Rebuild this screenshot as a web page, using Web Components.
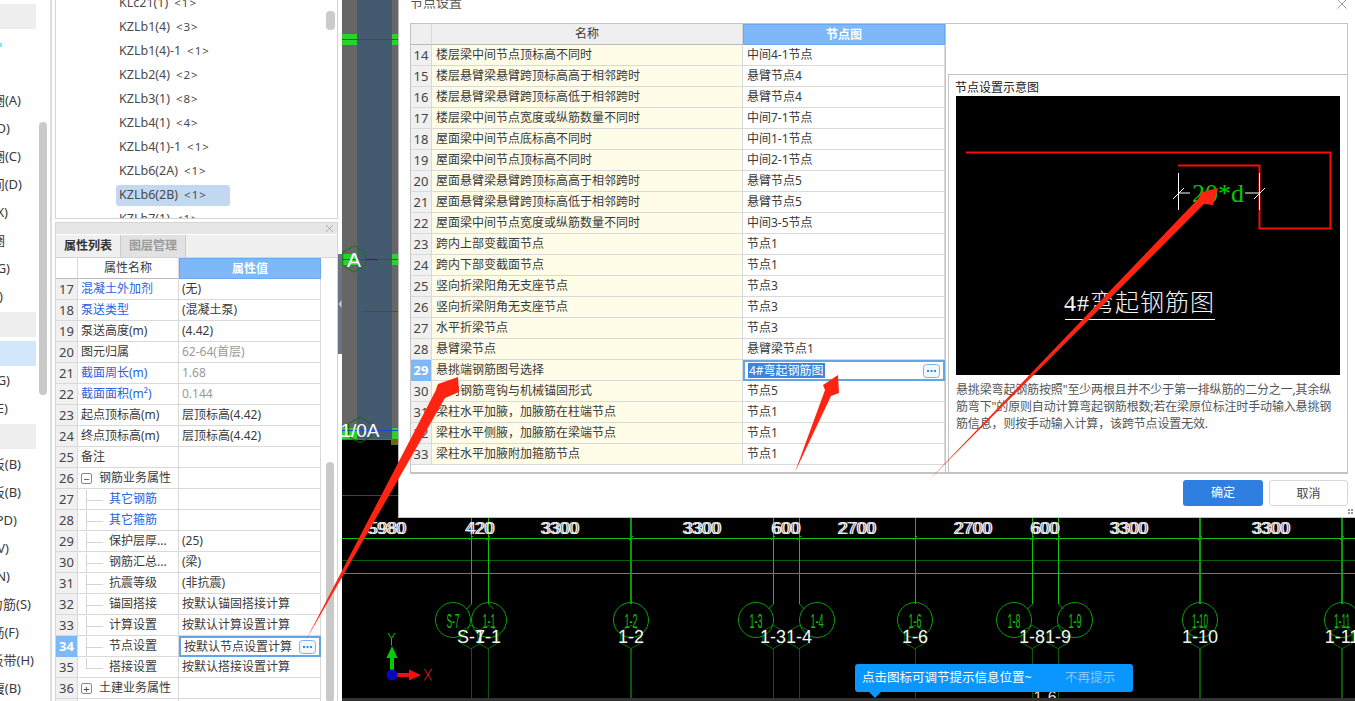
<!DOCTYPE html>
<html lang="zh-CN"><head><meta charset="utf-8"><title>节点设置</title>
<style>
html,body{margin:0;padding:0;height:701px;overflow:hidden;background:#fff}
body{font:12px/20px "Noto Sans","Noto Sans CJK SC",sans-serif;color:#3a3a3a}
</style></head><body>
<app-shell>
  <side-strip></side-strip>
  <mid-column>
    <tree-panel></tree-panel>
    <prop-panel></prop-panel>
  </mid-column>
  <split-bar></split-bar>
  <cad-canvas><node-dialog></node-dialog><hint-bubble></hint-bubble></cad-canvas>
</app-shell>
<red-arrows></red-arrows>
<script>
function def(name, css, html){
  customElements.define(name, class extends HTMLElement{
    constructor(){super();const r=this.attachShadow({mode:'open'});
      r.innerHTML='<style>'+css+'</style>'+html;}
  });
}
const FW='\uFF0C';
const dots=`<svg width="17" height="14" viewBox="0 0 17 14" style="display:block"><rect x=".5" y=".5" width="16" height="13" rx="3" fill="#f1f7fe" stroke="#7ab4ee"/><rect x="4" y="6" width="2" height="2" fill="#3d8ae0"/><rect x="7.5" y="6" width="2" height="2" fill="#3d8ae0"/><rect x="11" y="6" width="2" height="2" fill="#3d8ae0"/></svg>`;

def('app-shell',`:host{display:flex;height:701px;width:1355px;overflow:hidden}`,`<slot></slot>`);

/* left strip */
const sideRows=[['h'],['c'],['r',0,''],['r',21,'圈(A)'],['r',10,'D)'],['r',21,'圈(C)'],['r',22,'间(D)'],['r',8,'X)'],['r',5,'圈'],['r',10,'G)'],['r',3,')'],
['h'],['s'],['r',10,'G)'],['r',8,'E)'],['h'],['r',21,'板(B)'],['r',21,'板(B)'],['r',17,'PD)'],['r',9,'V)'],['r',10,'N)'],['r',31,'力筋(S)'],['r',19,'筋(F)'],['r',34,'板带(H)'],['r',21,'腹(B)']];
def('side-strip',`
:host{display:flex;width:55px;flex:none;height:701px;box-sizing:border-box;padding-right:4px;overflow:hidden}
.list{width:39px;padding-top:4px;flex:none;overflow:hidden}
.h{width:36px;height:25px;background:#eee;margin-bottom:2px}
.gap{margin-top:1px}
.r{height:28px;display:flex;justify-content:flex-end;overflow:hidden;line-height:26px;font-size:13px;white-space:nowrap;flex:none}
.c{height:28px;display:flex;align-items:center}.c i{display:block;width:2px;height:4px;background:#7fe8f4}
.s{height:28px;width:36px;display:flex;align-items:center}
.s i{display:block;width:36px;height:25px;background:#d2e6fc}
.bar{width:8px;height:273px;margin-top:122px;background:#c9c9c9;border-radius:4px;flex:none}
.line{width:2px;background:#dcdcdc;margin-left:3px;flex:none}
`,`<div class="list">${sideRows.map((r,i)=>r[0]==='h'?`<div class="h${i?' gap':''}"></div>`:r[0]==='s'?`<div class="s"><i></i></div>`:r[0]==='c'?`<div class="c"><i></i></div>`:`<div class="r" style="width:${r[1]}px">${r[2]}</div>`).join('')}</div><div class="bar"></div><div class="line"></div>`);

def('mid-column',`:host{display:flex;flex-direction:column;width:283px;flex:none;height:701px;gap:3px}`,`<slot></slot>`);

/* tree */
const treeRows=[['KLc21(1)','1'],['KZLb1(4)','3'],['KZLb1(4)-1','1'],['KZLb2(4)','2'],['KZLb3(1)','8'],['KZLb4(1)','4'],['KZLb4(1)-1','1'],['KZLb6(2A)','1'],['KZLb6(2B)','1',1],['KZLb7(1)','1']];
def('tree-panel',`
:host{display:flex;height:219px;box-sizing:border-box;border:1px solid #d4d4d4;border-top:0;background:#fff;overflow:hidden;flex:none}
.list{flex:1;margin-top:-9px;padding-left:60px;font-size:12.5px;color:#4a4a4a}
.row{height:24px;display:flex;align-items:center}
.row b{font-weight:400;display:flex;gap:6px;align-items:center;height:21px;padding-left:3px;border-radius:3px;width:111px;white-space:nowrap}
.row.sel b{background:#c2d8f1}
.row em{font-style:normal;font-size:11.5px;letter-spacing:1px}
.bar{width:9px;height:19px;margin:11px 2px 0 0;background:#cbcbcb;border-radius:4px;flex:none}
`,`<div class="list">${treeRows.map(r=>`<div class="row${r[2]?' sel':''}"><b><span>${r[0]}</span><em>&lt;${r[1]}&gt;</em></b></div>`).join('')}</div><div class="bar"></div>`);

/* grid row */
def('grid-row',`
:host{display:grid;grid-template-columns:var(--c1) var(--c2) var(--c3);height:21px;font-size:12px;line-height:20px;flex:none}
div{box-sizing:border-box;border-bottom:1px solid #d9d9d9;border-right:1px solid #d9d9d9;white-space:nowrap;overflow:hidden;height:21px}
.i{background:#f0f0f0;text-align:center;font-size:13px;color:#444}
.n{background:var(--name-bg,#fff);padding-left:var(--pad);display:flex;align-items:center}
.v{padding-left:var(--pad);display:flex;align-items:center;justify-content:space-between}
:host([head]){text-align:center}
:host([head]) .i{background:var(--head-bg,#fff);border-bottom-color:#bbb}
:host([head]) .n{background:var(--head-bg,#fff);justify-content:center;padding:0;border-bottom-color:#bbb;font-size:12px}
:host([head]) .v{background:#7fb8f8;color:#fff;font-weight:700;justify-content:center;padding:0;border:1px solid #6aa9ee}
:host([sel]) .i{background:#7fb8f8;color:#fff;font-weight:700;border-bottom-color:#7fb8f8}
:host([sel]) .v{border:2px solid #62a6ea;padding:0 2px 0 3px}
:host([dim]) .v{color:#9a9a9a}
:host([link]) .n{color:#2a62e0}
`,`<div class="i"><slot name="i"></slot></div><div class="n"><slot></slot></div><div class="v"><slot name="v"></slot></div>`);

/* properties */
const props=[[17,'混凝土外加剂','(无)','l'],[18,'泵送类型','(混凝土泵)','l'],[19,'泵送高度(m)','(4.42)'],[20,'图元归属','62-64(首层)','d'],[21,'截面周长(m)','1.68','ld'],[22,'截面面积(m²)','0.144','ld'],[23,'起点顶标高(m)','层顶标高(4.42)'],[24,'终点顶标高(m)','层顶标高(4.42)'],[25,'备注',''],
[26,'钢筋业务属性','','-'],[27,'其它钢筋','','tl'],[28,'其它箍筋','','tl'],[29,'保护层厚...','(25)','t'],[30,'钢筋汇总...','(梁)','t'],[31,'抗震等级','(非抗震)','t'],[32,'锚固搭接','按默认锚固搭接计算','t'],[33,'计算设置','按默认计算设置计算','t'],[34,'节点设置','按默认节点设置计算','ts'],[35,'搭接设置','按默认搭接设置计算','te'],[36,'土建业务属性','','+'],[37,'','']];
function propRow(p){const f=p[3]||'';
  const box=c=>`<span class="box">${c==='-'?'−':'+'}</span>`;
  let name=p[1];
  if(f==='-'||f==='+')name=box(f)+`<span>${p[1]}</span>`;
  else if(f.includes('t')){name=`<span class="tree${f.includes('e')?' end':''}"></span><span>${p[1]}</span>`}
  const attrs=(f.includes('l')?' link':'')+(f.includes('d')?' dim':'')+(f.includes('s')?' sel':'');
  const val=f.includes('s')?`<span slot="v" class="ed">${p[2]}</span><span slot="v" class="btn">${dots}</span>`:`<span slot="v">${p[2]}</span>`;
  return `<grid-row${attrs}><span slot="i">${p[0]}</span>${name}${val}</grid-row>`;}
def('prop-panel',`
:host{display:flex;flex-direction:column;flex:1;min-height:0;box-sizing:border-box;border:1px solid #d4d4d4;border-bottom:0;background:#fff;overflow:hidden;--c1:22px;--c2:101px;--c3:142px;--pad:3px}
.top{height:11px;background:#e6e6e6;display:flex;justify-content:flex-end;align-items:center;padding-right:3px;flex:none;border-bottom:1px solid #fff}
.tabs{display:flex;height:22px;background:#f0f0f0;flex:none;border-bottom:1px solid #d4d4d4}
.tab{width:64px;text-align:center;line-height:22px;font-weight:700;color:#333;font-size:12px;border-right:1px solid #ccc}
.tab.off{background:#e2e2e2;color:#9a9a9a}
.body{display:flex;flex:1;min-height:0}
.grid{width:265px;flex:none;display:flex;flex-direction:column;overflow:hidden}
.bar{width:8px;height:240px;margin:204px 0 0 5px;background:#c9c9c9;border-radius:4px;flex:none}
.box{width:11px;height:11px;border:1px solid #888;border-radius:2px;box-sizing:border-box;display:inline-flex;align-items:center;justify-content:center;font-size:11px;line-height:1;margin-right:7px;flex:none;color:#444}
.tree{width:23px;height:20px;margin-left:5px;flex:none;background:linear-gradient(#d4d4d4,#d4d4d4) 0 0/1px 100% no-repeat,linear-gradient(#d4d4d4,#d4d4d4) 0 10px/17px 1px no-repeat;margin-top:1px;align-self:stretch}
.tree.end{background:linear-gradient(#d4d4d4,#d4d4d4) 0 0/1px 11px no-repeat,linear-gradient(#d4d4d4,#d4d4d4) 0 10px/17px 1px no-repeat}
.ed{white-space:nowrap}.btn{flex:none;margin-right:1px}
`,`<div class="top"><svg width="9" height="9" viewBox="0 0 9 9"><path d="M1 1l7 7M8 1l-7 7" stroke="#aaa" fill="none"/></svg></div>
<div class="tabs"><div class="tab">属性列表</div><div class="tab off">图层管理</div></div>
<div class="body"><div class="grid"><grid-row head><span>属性名称</span><span slot="v">属性值</span></grid-row>${props.map(propRow).join('')}</div><div class="bar"></div></div>`);

def('split-bar',`:host{display:flex;flex-direction:column;width:4px;flex:none;height:701px;background:#fff}
.t{height:254px}.m{height:100px;background:#6b7480;display:flex;align-items:center;justify-content:center}
.m svg{display:block}`,`<div class="t"></div><div class="m"><svg width="4" height="8"><path d="M3.5 0v8L.5 4z" fill="#c4c8cc"/></svg></div>`);

/* canvas */
const axes=[[471,1],[488,1],[631,2],[773,1],[799,1],[915,1],[1032,1],[1058,1],[1200,2],[1342,2]];
const circles=[[453,471,'S-7'],[489,488,'1-1'],[631,631,'1-2'],[756,773,'1-3'],[817,799,'1-4'],[915,915,'1-6'],[1014,1032,'1-8'],[1075,1058,'1-9'],[1200,1200,'1-10'],[1342,1342,'1-11']];
const dims=[[387,'5980'],[480,'420'],[560,'3300'],[702,'3300'],[786,'600'],[857,'2700'],[973,'2700'],[1045,'600'],[1129,'3300'],[1271,'3300']];
const hex=(x,y,r)=>{const w=r*.866;return `${x},${y-r} ${x+w},${y-r/2} ${x+w},${y+r/2} ${x},${y+r} ${x-w},${y+r/2} ${x-w},${y-r/2}`};
let g='';
g+=`<rect x="342" y="0" width="56" height="440" fill="#666"/><rect x="357" y="0" width="35" height="439" fill="#445a70"/>`;
[[34,11],[254,11]].forEach(([y,h])=>{g+=`<rect x="342" y="${y}" width="15" height="${h}" fill="#2cd12c"/><rect x="392" y="${y}" width="6" height="${h}" fill="#2cd12c"/>`});
g+=`<rect x="342" y="428" width="15" height="11" fill="#2cd12c"/><rect x="392" y="428" width="6" height="11" fill="#2cd12c"/><rect x="391" y="439" width="7" height="6" fill="#6a6a14"/>`;
g+=`<path d="M342 39.5h56M342 259.5h23M378 259.5h20M361 311.5h37M342 430.5h56" stroke="#1848d8" stroke-width="1.2"/><path d="M365 259.5h13" stroke="#7a1010" stroke-width="1.2"/>`;
g+=`<polygon points="${hex(354,259,13)}" fill="none" stroke="#0a7a0a"/><polygon points="${hex(360,430,13)}" fill="none" stroke="#0a6a0a"/>`;
g+=`<text x="354" y="267" font-size="21" text-anchor="middle" fill="#fff" font-family="Liberation Sans">A</text><text x="360" y="437" font-size="19" text-anchor="middle" fill="#fff" font-family="Liberation Sans">1/0A</text>`;
g+=`<path d="M342 495.5h56" stroke="#0a6a0a"/>`;
g+=`<path d="M342 538.5H1355" stroke="#0cc00c"/><path d="M342 560.5H1355" stroke="#066006"/><path d="M342 573.5H1355" stroke="#0cc00c"/>`;
axes.forEach(([x,w])=>{const p=x+.5*(w%2);g+=`<path d="M${p} 518V604" stroke="${w===2?'#0a9a0a':'#0cc00c'}" stroke-width="${w}"/><path d="M${p} 648V698" stroke="#075a07" stroke-width="${w}"/><path d="M${x-2} 540l4-4" stroke="#0cc00c"/><polygon points="${hex(x,637,11.7)}" fill="none" stroke="#066a06"/>`});
circles.forEach(([c,a,t])=>{g+=`<circle cx="${c}" cy="620" r="17.5" fill="none" stroke="#0aa00a" stroke-width="1"/>`;
  if(c!==a){const s=c<a?-1:1;g+=`<path d="M${a+.5} 604l${s*5} 5" stroke="#0aa00a"/>`}
  g+=`<text x="${c}" y="628" font-size="21" text-anchor="middle" fill="#0cc00c" font-family="Liberation Sans" textLength="${t.length>3?16:13}" lengthAdjust="spacingAndGlyphs">${t}</text>`});
dims.forEach(([x,t])=>{g+=`<text x="${x-1}" y="534" font-size="17" text-anchor="middle" fill="#e8e8e8" font-family="Liberation Sans">${t}</text><text x="${x+1}" y="534" font-size="17" text-anchor="middle" fill="#e8e8e8" font-family="Liberation Sans">${t}</text>`});
axes.forEach(([x],i)=>{g+=`<text x="${x}" y="643" font-size="18" text-anchor="middle" fill="#f4f4f4" font-family="Liberation Sans">${circles[i][2]}</text>`});
g+=`<text x="1045" y="703" font-size="16" text-anchor="middle" fill="#ddd" font-family="Liberation Sans">1-6</text>`;
g+=`<path d="M390 675v-18h4v18z" fill="#0c0"/><path d="M392 646l5.5 12h-11z" fill="#0c0"/><rect x="392" y="673" width="18" height="4" fill="#f01010"/><path d="M421 675l-12-5.5v11z" fill="#f01010"/><circle cx="392" cy="675" r="5.5" fill="#0808b8"/>`;
g+=`<path d="M388 633l3.5 5.5 3.5-5.5M391.5 638.5v7" stroke="#0c0" fill="none"/><path d="M424.5 669l7 11.5M431.5 669l-7 11.5" stroke="#f01010" fill="none"/>`;
g+=`<rect x="342" y="698" width="1013" height="3" fill="#333"/>`;
def('cad-canvas',`:host{display:block;position:relative;flex:1;height:701px;background:#000;overflow:hidden}
svg{position:absolute;left:0;top:0;display:block}`,`<svg width="1013" height="701" viewBox="342 0 1013 701">${g}</svg><slot></slot>`);

/* dialog */
const nodes=[[14,'楼层梁中间节点顶标高不同时','中间4-1节点'],[15,'楼层悬臂梁悬臂跨顶标高高于相邻跨时','悬臂节点4'],[16,'楼层悬臂梁悬臂跨顶标高低于相邻跨时','悬臂节点4'],[17,'楼层梁中间节点宽度或纵筋数量不同时','中间7-1节点'],[18,'屋面梁中间节点底标高不同时','中间1-1节点'],[19,'屋面梁中间节点顶标高不同时','中间2-1节点'],[20,'屋面悬臂梁悬臂跨顶标高高于相邻跨时','悬臂节点5'],[21,'屋面悬臂梁悬臂跨顶标高低于相邻跨时','悬臂节点5'],[22,'屋面梁中间节点宽度或纵筋数量不同时','中间3-5节点'],[23,'跨内上部变截面节点','节点1'],[24,'跨内下部变截面节点','节点1'],[25,'竖向折梁阳角无支座节点','节点3'],[26,'竖向折梁阴角无支座节点','节点3'],[27,'水平折梁节点','节点3'],[28,'悬臂梁节点','悬臂梁节点1'],[29,'悬挑端钢筋图号选择','4#弯起钢筋图'],[30,'纵向钢筋弯钩与机械锚固形式','节点5'],[31,'梁柱水平加腋'+FW+'加腋筋在柱端节点','节点1'],[32,'梁柱水平侧腋'+FW+'加腋筋在梁端节点','节点1'],[33,'梁柱水平加腋附加箍筋节点','节点1']];
def('node-dialog',`
:host{position:absolute;left:56px;top:-15px;width:957px;height:533px;box-sizing:border-box;background:#fff;border-left:1px solid #bbb;border-bottom:1px solid #c4c4c4;display:flex;flex-direction:column;padding:0 7px 0 11px;--c1:21px;--c2:311px;--c3:202px;--pad:4px;--name-bg:#fffce8;--head-bg:#efefef}
.title{height:38px;flex:none;display:flex;justify-content:space-between;align-items:flex-start;font-size:13px;color:#555;line-height:34px}
.title svg{margin:13px 0 0 0}
.box{height:451px;box-sizing:border-box;border:1px solid #c4c4c4;border-bottom-width:2px;display:flex;flex:none}
.grid{width:535px;flex:none;box-sizing:border-box;border-right:1px solid #c4c4c4;display:flex;flex-direction:column}
.pane{margin:50px 0 0 2px;flex:1;box-sizing:border-box;border:1px solid #c4c4c4;border-bottom:0;padding:6px 7px 0 6px}
.pane h4{margin:0;font:12px/14px "Noto Sans","Noto Sans CJK SC",sans-serif;color:#222;height:15px}
.pic{width:384px;height:279px;background:#000;margin-left:1px;display:block}
.desc{margin:6px 0 0 1px;font-size:12px;line-height:17px;white-space:nowrap;color:#555;letter-spacing:-.15px}
.ft{display:flex;justify-content:flex-end;gap:6px;margin-top:6px;flex:none}
.b{width:80px;height:26px;box-sizing:border-box;border-radius:3px;text-align:center;line-height:25px;font-size:12px}
.ok{background:#2e7fe0;color:#fff}.no{border:1px solid #d8d8d8;color:#444;background:#fff;width:79px}
.ed{background:#3a85e0;color:#fff;padding:0 1px;line-height:15px;height:15px;display:block;white-space:nowrap}
.btn{flex:none;margin-right:1px}
.grip{position:absolute;right:1px;bottom:2px;width:6px;height:6px;background:radial-gradient(circle at 1px 1px,#999 1px,transparent 1.2px) 0 0/3px 3px}
`,`<div class="title"><span>节点设置</span><svg width="12" height="12" viewBox="0 0 12 12"><path d="M1.5 1.5l9 9M10.5 1.5l-9 9" stroke="#999" fill="none"/></svg></div>
<div class="box"><div class="grid"><grid-row head><span>名称</span><span slot="v">节点图</span></grid-row>
${nodes.map(n=>n[0]===29?`<grid-row sel><span slot="i">29</span>${n[1]}<span slot="v" class="ed">${n[2]}</span><span slot="v" class="btn">${dots}</span></grid-row>`:`<grid-row><span slot="i">${n[0]}</span>${n[1]}<span slot="v">${n[2]}</span></grid-row>`).join('')}</div>
<div class="pane"><h4>节点设置示意图</h4>
<svg class="pic" viewBox="956 96 384 279">
<path d="M966 152.5H1330.5V228.5H1259.5V165.5H1178" fill="none" stroke="#f50c0c" stroke-width="2"/>
<path d="M1178.5 173v37M1259.5 173v37M1178 193h12M1245 193h14M1173 199l11-11M1254 199l11-11" stroke="#fff" fill="none"/>
<text x="1192" y="202" font-family="Liberation Serif" font-size="26" fill="#00c800">20*d</text>
<text x="1064" y="311" font-family="Liberation Serif,Noto Sans CJK SC,serif" font-size="24" fill="#f4f4f4" letter-spacing="1" font-weight="300">4#弯起钢筋图</text>
<path d="M1065 319.5h150" stroke="#fff"/>
</svg>
<div class="desc">悬挑梁弯起钢筋按照"至少两根且并不少于第一排纵筋的二分之一,其余纵<br>筋弯下"的原则自动计算弯起钢筋根数;若在梁原位标注时手动输入悬挑钢<br>筋信息${FW}则按手动输入计算${FW}该跨节点设置无效.</div></div></div>
<div class="ft"><div class="b ok">确定</div><div class="b no">取消</div></div><div class="grip"></div>`);

def('hint-bubble',`
:host{position:absolute;left:513px;top:664px;width:278px;height:28px;background:#0a96ff;border-radius:3px;color:#fff;display:flex;align-items:center;font-size:12.5px;padding-left:7px;box-sizing:border-box}
.a{width:203px;white-space:nowrap}.b{color:#86c8ff}
.c{position:absolute;left:14px;top:28px;width:0;height:0;border:6px solid transparent;border-top-color:#0a96ff;border-bottom:0}
`,`<span class="a">点击图标可调节提示信息位置~</span><span class="b">不再提示</span><i class="c"></i>`);

/* annotation arrows over everything */
def('red-arrows',`:host{position:absolute;left:0;top:0;width:1355px;height:701px;pointer-events:none;display:block}
svg{display:block}`,`<svg width="1355" height="701" viewBox="0 0 1355 701" fill="#ff2412">
<polygon points="928,481 1204,204 1213,205 1218,188 1202,192 1198,199"/>
<polygon points="795,472 831,396 839,393 838,375 823,385 825,390"/>
<polygon points="306,640 445,398 459,392 458,377 438,384 436,390"/>
</svg>`);
</script>
</body></html>
